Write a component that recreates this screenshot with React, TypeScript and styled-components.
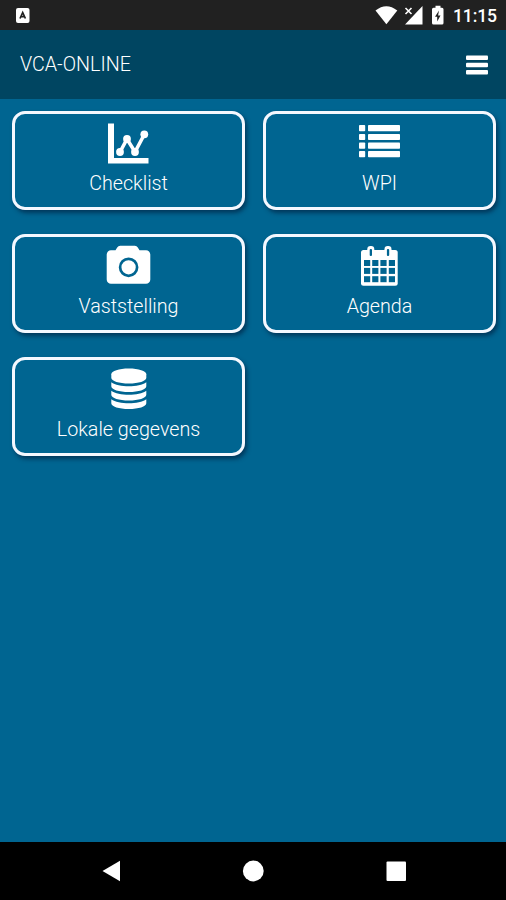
import React from "react";
import styled, { createGlobalStyle } from "styled-components";

const BLUE = "#006591";

const GlobalStyle = createGlobalStyle`
  * { box-sizing: border-box; }
  body { margin: 0; background: ${BLUE}; }
`;

const Screen = styled.div`
  display: flex;
  flex-direction: column;
  width: 506px;
  height: 900px;
  overflow: hidden;
  background: ${BLUE};
  color: #fff;
  font-family: Roboto, "Liberation Sans", sans-serif;
`;

const StatusBar = styled.div`
  display: flex;
  align-items: center;
  justify-content: space-between;
  flex: none;
  height: 30px;
  padding: 0 9px 0 15px;
  background: #212121;
`;

const StatusGroup = styled.div`
  display: flex;
  align-items: center;
`;

const Clock = styled.span`
  margin-left: 8px;
  width: 44px;
  white-space: nowrap;
  font-size: 17.6px;
  font-weight: 500;
  letter-spacing: -0.15px;
  line-height: 30px;
  padding-top: 1px;
`;

const Header = styled.header`
  display: flex;
  align-items: center;
  justify-content: space-between;
  flex: none;
  height: 69px;
  padding: 0 18px 0 20px;
  background: #004561;
`;

const Title = styled.h1`
  margin: 0;
  font-size: 19.7px;
  font-weight: 300;
  line-height: 24px;
`;

const MenuButton = styled.button`
  display: flex;
  padding: 0;
  border: 0;
  background: none;
`;

const Grid = styled.main`
  display: grid;
  flex: 1;
  grid-template-columns: 233px 233px;
  grid-auto-rows: 99px;
  align-content: start;
  gap: 24px 18px;
  padding: 12px 10px 0 12px;
`;

const Tile = styled.button`
  display: flex;
  flex-direction: column;
  align-items: center;
  padding: 8px 0 0;
  border: 3px solid #f4f8ff;
  border-radius: 13px;
  background: ${BLUE};
  box-shadow: 2px 3px 4px rgba(0, 20, 50, 0.55);
  color: inherit;
  font-family: inherit;
`;

const TileIcon = styled.svg`
  display: block;
  flex: none;
  width: 49px;
  height: 44px;
  fill: #fff;
`;

const TileLabel = styled.span`
  margin-top: 6px;
  font-size: 19.7px;
  font-weight: 300;
  line-height: 24px;
  white-space: nowrap;
`;

const NavBar = styled.nav`
  display: flex;
  flex: none;
  align-items: center;
  justify-content: space-between;
  height: 58px;
  padding: 0 99px 0 102px;
  background: #000;
`;

const ChartIcon = () => (
  <TileIcon viewBox="0 0 49 44">
    <path d="M4 1.5h6v34.5h34.5v5.5H4z" />
    <path d="M16 30L23 17L31 30L40.3 12.5" fill="none" stroke="#fff" strokeWidth="3.6" />
    <circle cx="16" cy="30" r="3.9" />
    <circle cx="23" cy="17" r="3.9" />
    <circle cx="31" cy="30" r="3.9" />
    <circle cx="40.3" cy="12.3" r="3.9" />
  </TileIcon>
);

const ListIcon = () => (
  <TileIcon viewBox="0 0 49 44">
    {[3, 11.9, 20.5, 29].map((y) => (
      <g key={y}>
        <rect x="4" y={y} width="6.2" height="6.2" rx="0.8" />
        <rect x="13" y={y} width="32" height="6.2" rx="0.8" />
      </g>
    ))}
  </TileIcon>
);

const CameraIcon = () => (
  <TileIcon viewBox="0 0 49 44">
    <path d="M7 5.3h4.5l1.7-2.8Q14.2.8 16.2.8h14.6q2 0 3 1.7l1.7 2.8H42a4.3 4.3 0 0 1 4.3 4.3v24.8a4.3 4.3 0 0 1-4.3 4.3H7a4.3 4.3 0 0 1-4.3-4.3V9.6A4.3 4.3 0 0 1 7 5.3z" />
    <circle cx="24.6" cy="22.3" r="8.5" fill="none" stroke={BLUE} strokeWidth="2.7" />
  </TileIcon>
);

const CalendarIcon = () => (
  <TileIcon viewBox="0 0 49 44">
    <rect x="6" y="5" width="36.7" height="35.7" rx="2.5" />
    <rect x="12.3" y="1" width="7" height="12" rx="3.2" />
    <rect x="29.5" y="1" width="7" height="12" rx="3.2" />
    <g fill={BLUE}>
      <rect x="14.7" y="4" width="2.3" height="7" rx="1" />
      <rect x="31.9" y="4" width="2.3" height="7" rx="1" />
      {[15, 22.9, 31.2].map((y) =>
        [9, 17.2, 25.4, 33.8].map((x) => (
          <rect key={`${x}-${y}`} x={x} y={y} width="6.2" height="6" />
        )),
      )}
    </g>
  </TileIcon>
);

const DatabaseIcon = () => (
  <TileIcon viewBox="0 0 49 44">
    <path d="M7.3 6.3C7.3 3 15 .5 24.8.5s17.5 2.5 17.5 5.8v3.5c0 3.3-7.7 5.8-17.5 5.8S7.3 13.1 7.3 9.8z" />
    {[0, 8.5, 17].map((dy) => (
      <path
        key={dy}
        transform={`translate(0 ${dy})`}
        d="M7.3 14.3c3.6 2.7 10.5 4 17.5 4s13.9-1.3 17.5-4v4c0 3.3-7.7 5.8-17.5 5.8S7.3 21.6 7.3 18.3z"
      />
    ))}
  </TileIcon>
);

const tiles = [
  { label: "Checklist", Icon: ChartIcon },
  { label: "WPI", Icon: ListIcon },
  { label: "Vaststelling", Icon: CameraIcon },
  { label: "Agenda", Icon: CalendarIcon },
  { label: "Lokale gegevens", Icon: DatabaseIcon },
];

export default function App() {
  return (
    <Screen>
      <GlobalStyle />
      <StatusBar>
        <svg width="16" height="18" viewBox="0 0 16 18">
          <rect x="1" y="2" width="13.5" height="15" rx="2" fill="#fff" />
          <path d="M5 12.5L7.7 6.5L10.4 12.5M6 10.7h3.4" fill="none" stroke="#212121" strokeWidth="1.7" />
        </svg>
        <StatusGroup>
          <svg width="70" height="22" viewBox="0 0 70 22" fill="#fff">
            <path d="M0.5 6.5Q11.3 -2 22.3 6.5L11.4 20.3z" />
            <path d="M47.5 2V20.5H30z" />
            <rect x="28" y="1" width="11" height="9.5" fill="#212121" />
            <path d="M30.5 4l6 6m0-6l-6 6" stroke="#fff" strokeWidth="1.6" />
            <path d="M60.5 1.8h5v2h1.5q1.5 0 1.5 1.5v13.7q0 1.5-1.5 1.5h-8.5q-1.5 0-1.5-1.5V5.3q0-1.5 1.5-1.5H60.5z" />
            <path d="M64 6.5l-4 6.2h2.2V17.5l3.3-6h-2.4z" fill="#212121" />
          </svg>
          <Clock>11:15</Clock>
        </StatusGroup>
      </StatusBar>
      <Header>
        <Title>VCA-ONLINE</Title>
        <MenuButton aria-label="Menu">
          <svg width="22" height="20" viewBox="0 0 22 20" fill="#fff">
            <rect y="0.5" width="22" height="4.6" rx="1" />
            <rect y="7.7" width="22" height="4.6" rx="1" />
            <rect y="14.9" width="22" height="4.6" rx="1" />
          </svg>
        </MenuButton>
      </Header>
      <Grid>
        {tiles.map(({ label, Icon }) => (
          <Tile key={label}>
            <Icon />
            <TileLabel>{label}</TileLabel>
          </Tile>
        ))}
      </Grid>
      <NavBar>
        <svg width="18" height="22" viewBox="0 0 18 22">
          <path d="M0.5 11L18 0.8V21.2z" fill="#fff" />
        </svg>
        <svg width="22" height="22" viewBox="0 0 22 22">
          <circle cx="11.3" cy="11" r="10.4" fill="#fff" />
        </svg>
        <svg width="21" height="22" viewBox="0 0 21 22">
          <rect x="0.5" y="1.5" width="19.5" height="19.5" rx="1" fill="#fff" />
        </svg>
      </NavBar>
    </Screen>
  );
}
